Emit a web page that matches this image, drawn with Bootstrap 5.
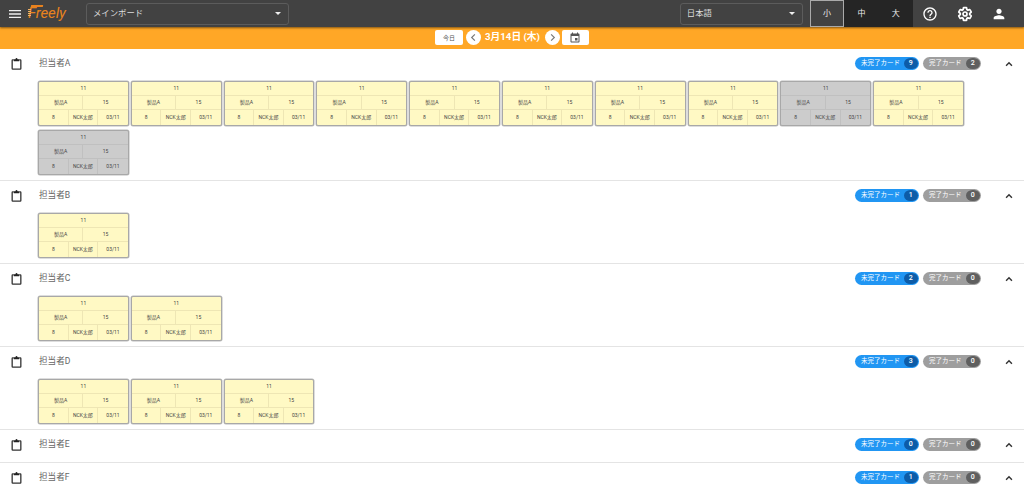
<!DOCTYPE html>
<html lang="ja"><head><meta charset="utf-8"><title>Freely</title>
<link href="https://cdn.jsdelivr.net/npm/bootstrap@5.3.0/dist/css/bootstrap.min.css" rel="stylesheet">
<style>
html,body{height:490px;overflow:hidden;background:#fff}
body{font-family:Roboto,"Noto Sans CJK JP",sans-serif;color:#555}
.topbar{height:27px;background:#424242;box-shadow:0 1px 2px rgba(0,0,0,.5);position:relative;z-index:2;color:#fff}
.menu-ic{width:16px;height:16px;margin-left:7px;fill:#eee}
.logo-txt{position:relative;width:58px;margin-left:5px;font-size:15px;font-style:italic;color:#e8821e;letter-spacing:-.1px;line-height:27px;font-weight:400;white-space:nowrap}
.logo-txt::before{content:"";position:absolute;left:3px;top:5px;width:12px;height:2px;background:#e8821e;transform:skewX(-12deg)}
.logo-txt::after{content:"";position:absolute;left:0;top:9px;width:3px;height:8px;background:repeating-linear-gradient(180deg,#f2b06a 0 1px,transparent 1px 2px)}
.sel-box{height:22px;border:1px solid #5c5c5c;border-radius:3px;font-size:8.4px;color:#ddd;padding:0 7px 0 6px}
.sel-main{width:203px}.sel-lang{width:123px;margin-left:auto}
.caret-dn{width:0;height:0;border-left:3px solid transparent;border-right:3px solid transparent;border-top:3px solid #eee}
.size-btn{width:34.4px;height:27px;font-size:8px;background:#252525;color:#eee}
.size-on{background:#424242;border:1px solid #aaa}
.size-first{margin-left:7px}
.tool-ic{width:34.5px;height:27px}
.tool-ic svg{width:16px;height:16px}
.tool-end{margin-right:7.5px}
.datebar{height:21.5px;background:#ffa726;color:#fff;font-size:9.7px;font-weight:700}
.today-btn{width:28px;height:15px;background:#fff;border-radius:2px;font-size:6px;color:#555;font-weight:400}
.round-btn{width:15px;height:15px;border-radius:50%;background:#fff;margin-left:3px}
.date-txt{margin:0 5px 0 4px}
.round-next{margin-left:0}
.cal-btn{width:27px;height:15px;background:#fff;border-radius:2px;margin-left:2px}
.sec-row{border-bottom:1px solid #e4e4e4}
.sec-head{height:32px;padding:0 9px 2px 10px}
.clip-ic{width:13px;height:14px}
.sec-title{margin-left:16px;font-size:8.6px;color:#666}
.pill{height:13px;border-radius:7px;color:#fff;font-size:6.5px;padding:0 1.5px 0 6px}
.pill-blue{background:#2196f3;width:64px}
.pill-gray{background:#9e9e9e;width:58px;margin-left:4px}
.pill-num{width:13.5px;height:11.5px;border-radius:50%;margin-left:auto;font-size:7px;font-weight:500}
.pill-blue .pill-num{background:#0d5ca8}.pill-gray .pill-num{background:#5f5f5f}
.chev{width:10px;height:10px;margin-left:23px;margin-right:1px}
.wrk-wrap{padding:.5px 0 0 38px;gap:4.5px 2px;margin-bottom:5px}
.wrk{width:90.8px;height:44.5px;background:#fff9c4;border:1px solid #a8a8a8;border-radius:2px;box-shadow:0 0 0 .5px #bbb;font-size:5px;color:#444;display:grid;grid-template-columns:repeat(6,1fr);grid-template-rows:1fr 1fr 1fr}
.wrk>div{display:flex;align-items:center;justify-content:center;border-bottom:1px solid #eee6b4;border-right:1px solid #eee6b4;min-width:0;white-space:nowrap}
.wrk>div:nth-child(1){grid-column:1/7;border-right:0}
.wrk>div:nth-child(2){grid-column:1/4}.wrk>div:nth-child(3){grid-column:4/7;border-right:0}
.wrk>div:nth-child(4){grid-column:1/3}.wrk>div:nth-child(5){grid-column:3/5}.wrk>div:nth-child(6){grid-column:5/7}
.wrk>div:nth-child(n+4){border-bottom:0}
.wrk>div:nth-child(6){border-right:0}
.wrk-gray{background:#cccccc}
.wrk-gray>div{border-color:#c0c0c0}
</style></head><body>
<div class="topbar d-flex align-items-center">
<svg class="menu-ic" viewBox="0 0 24 24"><path d="M3 18h18v-2H3v2zm0-5h18v-2H3v2zm0-7v2h18V6H3z"/></svg>
<div class="logo-txt">Freely</div>
<div class="sel-box sel-main d-flex align-items-center justify-content-between"><span>メインボード</span><span class="caret-dn"></span></div>
<div class="sel-box sel-lang d-flex align-items-center justify-content-between"><span>日本語</span><span class="caret-dn"></span></div>
<div class="size-btn size-first size-on d-flex align-items-center justify-content-center">小</div>
<div class="size-btn d-flex align-items-center justify-content-center">中</div>
<div class="size-btn d-flex align-items-center justify-content-center">大</div>
<div class="tool-ic d-flex align-items-center justify-content-center"><svg viewBox="0 0 24 24" fill="#fff"><path d="M11 18h2v-2h-2v2zm1-16C6.48 2 2 6.48 2 12s4.48 10 10 10 10-4.48 10-10S17.52 2 12 2zm0 18c-4.41 0-8-3.59-8-8s3.59-8 8-8 8 3.59 8 8-3.59 8-8 8zm0-14c-2.21 0-4 1.79-4 4h2c0-1.1.9-2 2-2s2 .9 2 2c0 2-3 1.75-3 5h2c0-2.25 3-2.5 3-5 0-2.21-1.79-4-4-4z"/></svg></div>
<div class="tool-ic d-flex align-items-center justify-content-center"><svg viewBox="0 0 24 24" fill="none" stroke="#fff" stroke-width="2.6"><path d="M19.14 12.94c.04-.3.06-.61.06-.94 0-.32-.02-.64-.07-.94l2.03-1.58c.18-.14.23-.41.12-.61l-1.92-3.32c-.12-.22-.37-.29-.59-.22l-2.39.96c-.5-.38-1.03-.7-1.62-.94l-.36-2.54c-.04-.24-.24-.41-.48-.41h-3.84c-.24 0-.43.17-.47.41l-.36 2.54c-.59.24-1.13.57-1.62.94l-2.39-.96c-.22-.08-.47 0-.59.22L2.74 8.87c-.12.21-.08.47.12.61l2.03 1.58c-.05.3-.09.63-.09.94s.02.64.07.94l-2.03 1.58c-.18.14-.23.41-.12.61l1.92 3.32c.12.22.37.29.59.22l2.39-.96c.5.38 1.03.7 1.62.94l.36 2.54c.05.24.24.41.48.41h3.84c.24 0 .44-.17.47-.41l.36-2.54c.59-.24 1.13-.56 1.62-.94l2.39.96c.22.08.47 0 .59-.22l1.92-3.32c.12-.22.07-.47-.12-.61l-2.01-1.58z"/><circle cx="12" cy="12" r="3"/></svg></div>
<div class="tool-ic tool-end d-flex align-items-center justify-content-center"><svg viewBox="0 0 24 24" fill="#fff"><path d="M12 12c2.21 0 4-1.79 4-4s-1.79-4-4-4-4 1.79-4 4 1.79 4 4 4zm0 2c-2.67 0-8 1.34-8 4v2h16v-2c0-2.66-5.33-4-8-4z"/></svg></div>
</div>
<div class="datebar d-flex align-items-center justify-content-center">
<div class="today-btn d-flex align-items-center justify-content-center">今日</div>
<div class="round-btn d-flex align-items-center justify-content-center"><svg width="11" height="11" viewBox="0 0 24 24" fill="none" stroke="#777" stroke-width="2.5"><path d="M15 5l-7 7 7 7"/></svg></div>
<span class="date-txt">3月14日 (木)</span>
<div class="round-btn round-next d-flex align-items-center justify-content-center"><svg width="11" height="11" viewBox="0 0 24 24" fill="none" stroke="#777" stroke-width="2.5"><path d="M9 5l7 7-7 7"/></svg></div>
<div class="cal-btn d-flex align-items-center justify-content-center"><svg width="12" height="12" viewBox="0 0 24 24" fill="#555"><path d="M17 12h-5v5h5v-5zM16 1v2H8V1H6v2H5c-1.11 0-1.99.9-1.99 2L3 19c0 1.1.89 2 2 2h14c1.1 0 2-.9 2-2V5c0-1.1-.9-2-2-2h-1V1h-2zm3 18H5V8h14v11z"/></svg></div>
</div>
<main id="m"></main>
<script>
const data=[["A",9,2,[8,10]],["B",1,0,[]],["C",2,0,[]],["D",3,0,[]],["E",0,0,[]],["F",1,0,[]]];
const counts={A:11,B:1,C:2,D:3,E:0,F:0};
const clip='<svg class="clip-ic" viewBox="0 0 24 24"><path fill="none" stroke="#333" stroke-width="2.4" d="M7 4.500H5a1 1 0 0 0-1 1v15a1 1 0 0 0 1 1h14a1 1 0 0 0 1-1v-15a1 1 0 0 0-1-1h-2"/><path fill="#222" d="M7 3h3c.4-1.200 1-2 2-2s1.600.8 2 2h3v4H7z"/></svg>';
const chev='<svg class="chev" viewBox="0 0 24 24" fill="none" stroke="#333" stroke-width="3.4"><path d="M5 16l7-7 7 7"/></svg>';
let h='';
for(const [n,a,b,gr] of data){
 let cards='';
 for(let i=0;i<counts[n];i++){cards+=`<div class="wrk${gr.includes(i)?' wrk-gray':''}"><div>11</div><div>製品A</div><div>15</div><div>8</div><div>NCK太郎</div><div>03/11</div></div>`}
 h+=`<section class="sec-row"><div class="sec-head d-flex align-items-center">${clip}<span class="sec-title">担当者${n}</span><div class="pill pill-blue d-flex align-items-center ms-auto">未完了カード<span class="pill-num d-flex align-items-center justify-content-center">${a}</span></div><div class="pill pill-gray d-flex align-items-center">完了カード<span class="pill-num d-flex align-items-center justify-content-center">${b}</span></div>${chev}</div>`+(cards?`<div class="wrk-wrap d-flex flex-wrap">${cards}</div>`:'')+`</section>`;
}
document.getElementById('m').innerHTML=h;
</script>
<script src="https://cdn.jsdelivr.net/npm/bootstrap@5.3.0/dist/js/bootstrap.bundle.min.js"></script>
</body></html>
